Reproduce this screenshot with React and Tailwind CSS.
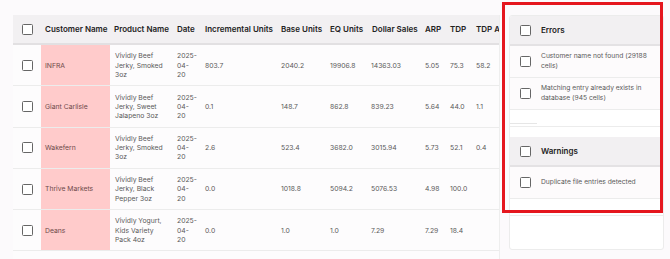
import React from 'react';

const rows = [
  { customer: 'INFRA', product: ['Vividly Beef', 'Jerky, Smoked', '3oz'], inc: '803.7', base: '2040.2', eq: '19906.8', sales: '14363.03', arp: '5.05', tdp: '75.3', tdpa: '58.2' },
  { customer: 'Giant Carlisle', product: ['Vividly Beef', 'Jerky, Sweet', 'Jalapeno 3oz'], inc: '0.1', base: '148.7', eq: '862.8', sales: '839.23', arp: '5.64', tdp: '44.0', tdpa: '1.1' },
  { customer: 'Wakefern', product: ['Vividly Beef', 'Jerky, Smoked', '3oz'], inc: '2.6', base: '523.4', eq: '3682.0', sales: '3015.94', arp: '5.73', tdp: '52.1', tdpa: '0.4' },
  { customer: 'Thrive Markets', product: ['Vividly Beef', 'Jerky, Black', 'Pepper 3oz'], inc: '0.0', base: '1018.8', eq: '5094.2', sales: '5076.53', arp: '4.98', tdp: '100.0', tdpa: '' },
  { customer: 'Deans', product: ['Vividly Yogurt,', 'Kids Variety', 'Pack 4oz'], inc: '0.0', base: '1.0', eq: '1.0', sales: '7.29', arp: '7.29', tdp: '18.4', tdpa: '' },
];

const cols = 'grid grid-cols-[28px_69px_65px_28px_75px_50px_42px_52px_28px_26px_60px]';

function Box() {
  return <div className="w-[11px] h-[11px] border-[1.5px] border-[#666] rounded-[1.5px] bg-white" />;
}

function Section({ title, items }) {
  return (
    <div className="border-b border-[#ececec]">
      <div className="flex items-center h-[30px] bg-[#f2f0f2] border-b-2 border-[#e4e2e4]">
        <div className="w-[31px] flex justify-center"><Box /></div>
        <span className="text-[8px] font-semibold text-[#222]">{title}</span>
      </div>
      {items.map((t) => (
        <div key={t} className="flex items-center h-[32px] border-b border-[#ececec] bg-[#fdfbfc]">
          <div className="w-[31px] shrink-0 flex justify-center"><Box /></div>
          <span className="text-[6.7px] leading-[9.5px] text-[#5a5a5a] pr-2">{t}</span>
        </div>
      ))}
      <div className="h-[16px] relative">
        <div className="absolute left-0 bottom-[2px] w-[27px] h-px bg-[#e6e6e6]" />
      </div>
    </div>
  );
}

export default function App() {
  return (
    <div className="w-[670px] h-[259px] overflow-hidden bg-[#fcfafc] relative" style={{ fontFamily: 'Inter, "Noto Sans", sans-serif' }}>
      <div className="flex pt-[15px] pl-[13px] gap-[9px]">
        <div className="w-[487px] shrink-0 overflow-hidden border-r border-[#eeeeee] bg-[#fdfcfd]">
          <div className={`${cols} h-[30px] items-center bg-[#f2f0f2] border-b-2 border-[#e2e0e2] text-[8px] font-semibold text-[#222] whitespace-nowrap`}>
            <div className="flex justify-center"><Box /></div>
            <div className="pl-[4px]">Customer Name</div>
            <div className="pl-[4px]">Product Name</div>
            <div className="pl-[2px]">Date</div>
            <div className="pl-[2px]">Incremental Units</div>
            <div className="pl-[3px]">Base Units</div>
            <div className="pl-[2px]">EQ Units</div>
            <div className="pl-[2px]">Dollar Sales</div>
            <div className="pl-[3px]">ARP</div>
            <div>TDP</div>
            <div>TDP A</div>
          </div>
          {rows.map((r) => (
            <div key={r.customer} className={`${cols} h-[41.3px] items-center border-b border-[#ececec] text-[6.8px] leading-[9.3px] text-[#5a5a5a]`}>
              <div className="flex justify-center"><Box /></div>
              <div className="h-full flex items-center bg-[#ffcbcb] pl-[4px] text-[#6e4a4a]">{r.customer}</div>
              <div className="pl-[5px]">{r.product.map((p) => <div key={p}>{p}</div>)}</div>
              <div className="pl-[2px]"><div>2025-</div><div>04-</div><div>20</div></div>
              <div className="pl-[2px]">{r.inc}</div>
              <div className="pl-[3px]">{r.base}</div>
              <div className="pl-[2px]">{r.eq}</div>
              <div className="pl-[1px]">{r.sales}</div>
              <div className="pl-[3px]">{r.arp}</div>
              <div>{r.tdp}</div>
              <div>{r.tdpa}</div>
            </div>
          ))}
          <div className="h-[10px] bg-[#fdfcfd]" />
        </div>
        <div className="w-[155px] h-[235px] shrink-0 bg-white border border-[#ececec] rounded-[3px] overflow-hidden">
          <Section title="Errors" items={['Customer name not found (29188 cells)', 'Matching entry already exists in database (945 cells)']} />
          <div className="h-[10px]" />
          <Section title="Warnings" items={['Duplicate file entries detected']} />
        </div>
      </div>
      <div className="absolute left-[502px] top-[2px] w-[161px] h-[211px] border-[3px] border-[#e5161e] pointer-events-none" />
    </div>
  );
}
